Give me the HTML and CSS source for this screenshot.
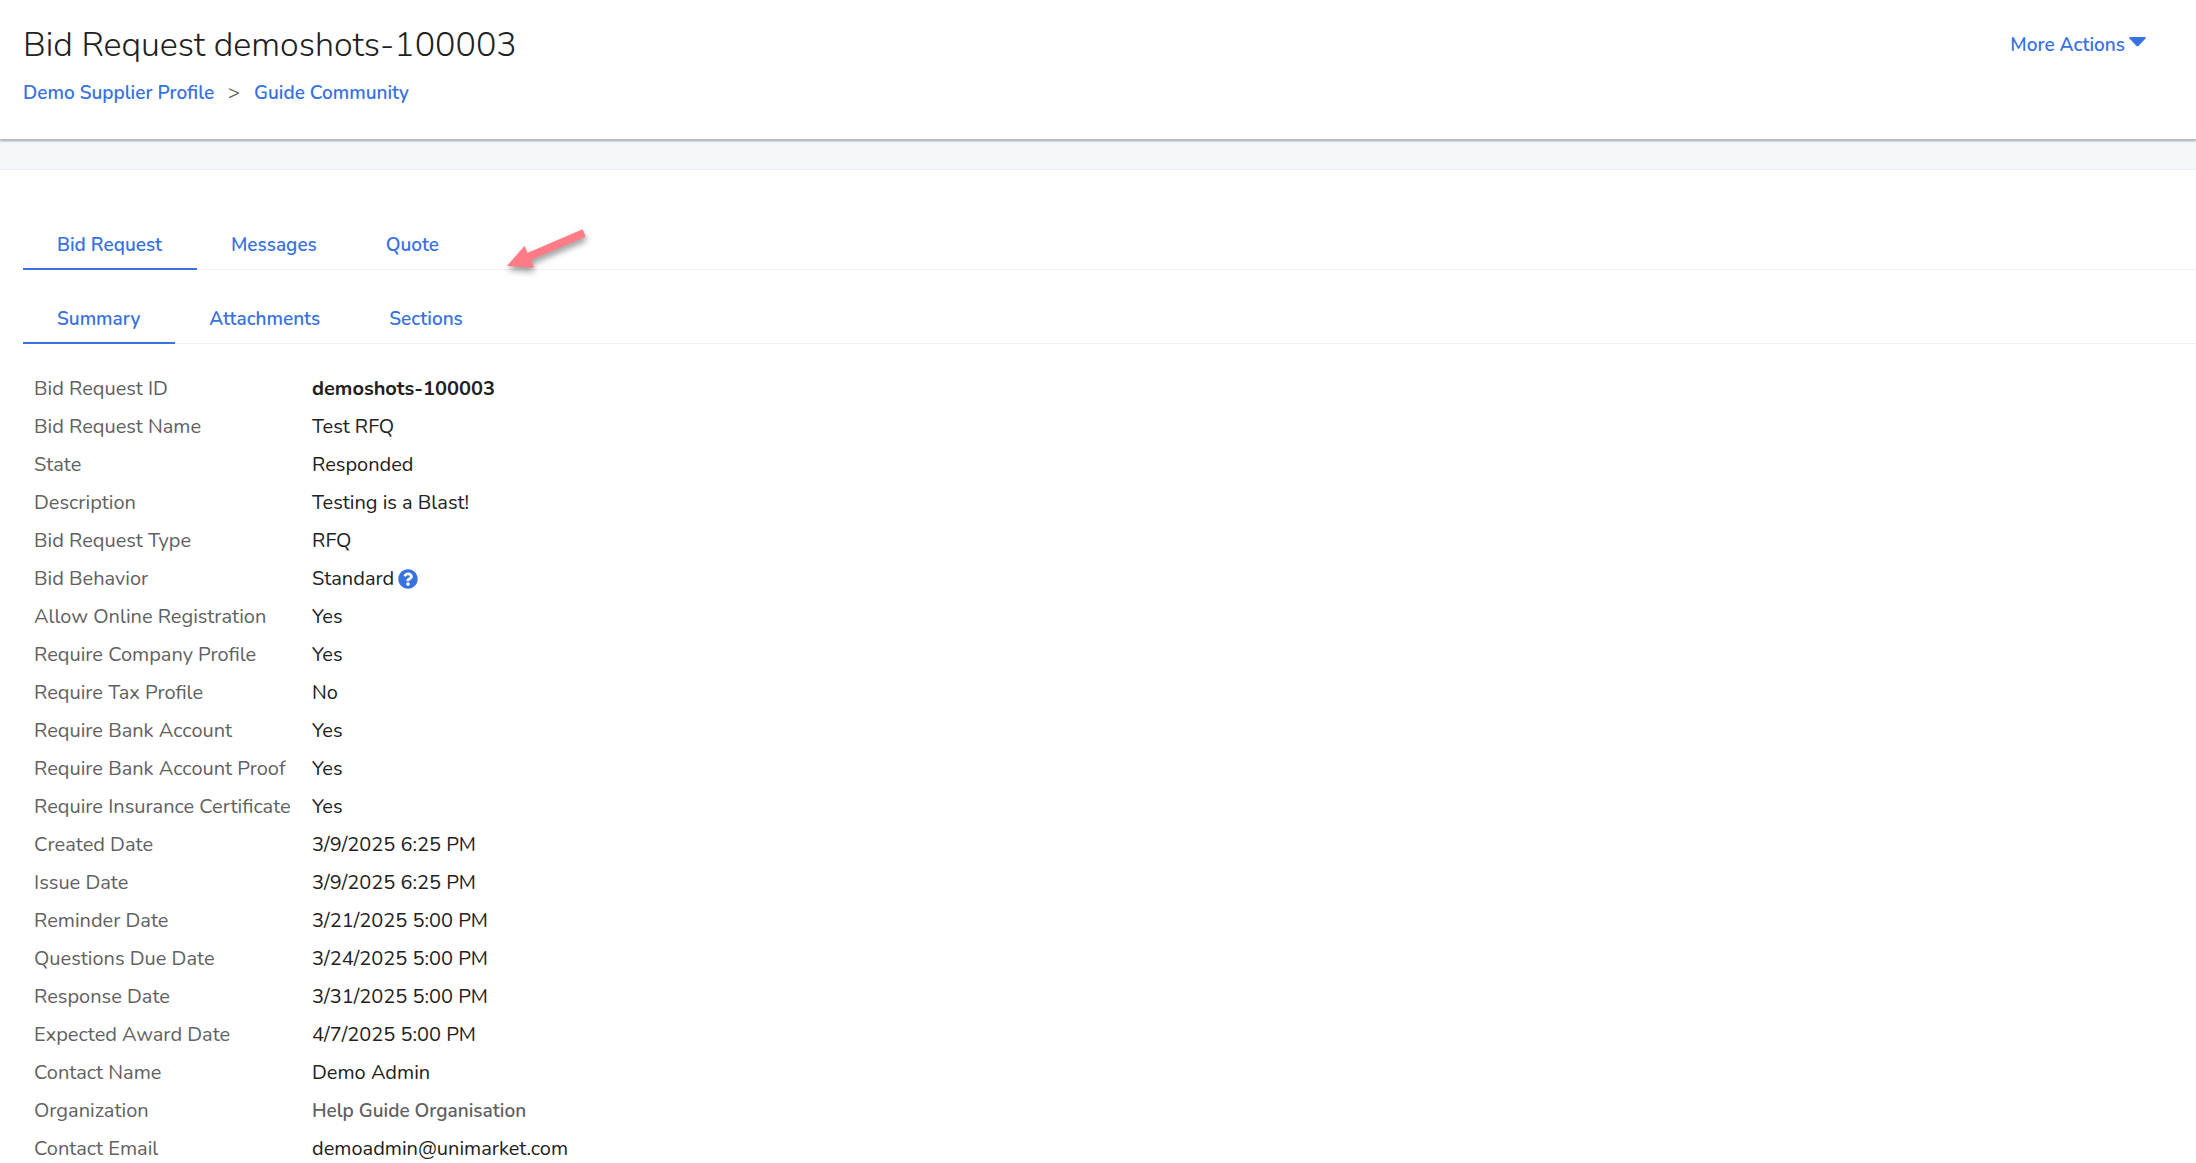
FILE: index.html
```html
<!DOCTYPE html>
<html lang="en">
<head>
  <meta charset="UTF-8">
  <meta name="viewport" content="width=device-width, initial-scale=1.0">
  <title>Bid Request demoshots-100003</title>
  <link rel="stylesheet" href="styles.css">
</head>
<body>
  <header class="page-header">
    <div>
      <h1>Bid Request demoshots-100003</h1>
      <nav class="breadcrumb" aria-label="Breadcrumb">
        <a href="#">Demo Supplier Profile</a>
        <span class="separator">&gt;</span>
        <a href="#">Guide Community</a>
      </nav>
    </div>
    <button type="button" class="more-actions">
      More Actions
      <svg class="caret" viewBox="0 0 17 10" aria-hidden="true"><path d="M1.2 0h14.600c.9 0 1.300 1 .7 1.600L9.700 8.800c-.7.7-1.700.7-2.400 0L.5 1.600C-.1 1 .3 0 1.200 0z"/></svg>
    </button>
  </header>

  <main class="content">
    <nav class="tabs" aria-label="Bid request">
      <a href="#" class="tab active">Bid Request</a>
      <a href="#" class="tab">Messages</a>
      <a href="#" class="tab">Quote</a>
      <svg class="arrow" viewBox="0 0 90 52" aria-hidden="true"><path d="M4 40L21.700 19.700L24.300 27L79.700 3.300L82.700 10.700L28 34L30.700 41.700Z"/></svg>
    </nav>
    <nav class="tabs" aria-label="Bid request details">
      <a href="#" class="tab active">Summary</a>
      <a href="#" class="tab">Attachments</a>
      <a href="#" class="tab">Sections</a>
    </nav>

    <table class="details">
      <tbody>
        <tr><th scope="row">Bid Request ID</th><td><strong>demoshots-100003</strong></td></tr>
        <tr><th scope="row">Bid Request Name</th><td>Test RFQ</td></tr>
        <tr><th scope="row">State</th><td>Responded</td></tr>
        <tr><th scope="row">Description</th><td>Testing is a Blast!</td></tr>
        <tr><th scope="row">Bid Request Type</th><td>RFQ</td></tr>
        <tr>
          <th scope="row">Bid Behavior</th>
          <td>
            <div class="with-help">
              Standard
              <button type="button" class="help" aria-label="Help">
                <svg viewBox="0 0 512 512" aria-hidden="true"><path d="M504 256c0 137-111 248-248 248S8 393 8 256 119 8 256 8s248 111 248 248zM262.700 90c-54.500 0-89.300 23-116.500 63.800-3.500 5.300-2.400 12.400 2.700 16.300l34.700 26.300c5.200 3.900 12.600 3 16.700-2.100 17.900-22.700 30.100-35.800 57.300-35.800 20.400 0 45.700 13.100 45.700 33 0 15-12.400 22.700-32.500 34C247.100 238.500 216 255 216 296v4c0 6.600 5.400 12 12 12h56c6.600 0 12-5.400 12-12v-1.300c0-28.600 83.700-29.800 83.700-107.200 0-58.300-60.500-101.500-117-101.500zM256 338c-25.400 0-46 20.600-46 46s20.600 46 46 46 46-20.600 46-46-20.600-46-46-46z"/></svg>
              </button>
            </div>
          </td>
        </tr>
        <tr><th scope="row">Allow Online Registration</th><td>Yes</td></tr>
        <tr><th scope="row">Require Company Profile</th><td>Yes</td></tr>
        <tr><th scope="row">Require Tax Profile</th><td>No</td></tr>
        <tr><th scope="row">Require Bank Account</th><td>Yes</td></tr>
        <tr><th scope="row">Require Bank Account Proof</th><td>Yes</td></tr>
        <tr><th scope="row">Require Insurance Certificate</th><td>Yes</td></tr>
        <tr><th scope="row">Created Date</th><td>3/9/2025 6:25 PM</td></tr>
        <tr><th scope="row">Issue Date</th><td>3/9/2025 6:25 PM</td></tr>
        <tr><th scope="row">Reminder Date</th><td>3/21/2025 5:00 PM</td></tr>
        <tr><th scope="row">Questions Due Date</th><td>3/24/2025 5:00 PM</td></tr>
        <tr><th scope="row">Response Date</th><td>3/31/2025 5:00 PM</td></tr>
        <tr><th scope="row">Expected Award Date</th><td>4/7/2025 5:00 PM</td></tr>
        <tr><th scope="row">Contact Name</th><td>Demo Admin</td></tr>
        <tr><th scope="row">Organization</th><td><span class="organization">Help Guide Organisation</span></td></tr>
        <tr><th scope="row">Contact Email</th><td>demoadmin@unimarket.com</td></tr>
      </tbody>
    </table>
  </main>
</body>
</html>
```

FILE: styles.css
```css
* {
  box-sizing: border-box;
}
body {
  margin: 0;
  background-color: #f4f8fb;
  color: #212121;
  font-family: Nunito, Lato, sans-serif;
  font-size: 20px;
  line-height: 28px;
}
a {
  color: #3871e0;
  font-size: 19px;
  font-weight: 600;
  text-decoration: none;
}
button {
  padding: 0;
  border: none;
  background: none;
  font: inherit;
  color: #3871e0;
  cursor: pointer;
}
.page-header {
  display: flex;
  justify-content: space-between;
  align-items: flex-start;
  padding: 25px 50px 32px 23px;
  background: #fff;
  border-bottom: 1px solid #b9bbbd;
  box-shadow: 0 1px 2px rgba(0, 0, 0, 0.35);
}
h1 {
  margin: 0 0 14px;
  font-size: 34px;
  font-weight: 350;
  line-height: 40px;
}
.breadcrumb {
  display: flex;
  gap: 14px;
}
.separator {
  color: #616161;
}
.more-actions {
  display: flex;
  align-items: center;
  gap: 4px;
  margin-top: 6px;
  font-size: 19px;
  font-weight: 600;
}
.caret {
  width: 17px;
  height: 10px;
  margin-bottom: 6px;
  fill: #3871e0;
}
.content {
  margin-top: 29px;
  padding: 54px 0 0 23px;
  background: #fff;
  border-top: 1px solid #e8eef2;
}
.tabs {
  position: relative;
  display: flex;
  margin-bottom: 28px;
  border-bottom: 1px solid #f0f1f2;
}
.tab {
  margin-bottom: -1px;
  padding: 7px 35px 9px 34px;
  border-bottom: 2px solid transparent;
}
.tab.active {
  border-bottom-color: #3871e0;
}
/* pointer lying over the first tab row */
.arrow {
  position: absolute;
  left: 480px;
  top: 2px;
  width: 90px;
  height: 52px;
  fill: #ff7b85;
  filter: drop-shadow(1px 4px 3px rgba(0, 0, 0, 0.4));
}
.details {
  width: 100%;
  margin-top: -2px;
  border-collapse: collapse;
}
.details th,
.details td {
  height: 38px;
  padding: 5px 11px;
  text-align: left;
}
.details th {
  width: 278px;
  padding-right: 0;
  color: #616161;
  font-weight: 400;
  white-space: nowrap;
}
.with-help {
  display: flex;
  align-items: center;
  gap: 4px;
}
.help {
  width: 20px;
  height: 20px;
}
.help svg {
  display: block;
  fill: #3871e0;
}
.organization {
  color: #616161;
  font-size: 19px;
  font-weight: 600;
}
```
